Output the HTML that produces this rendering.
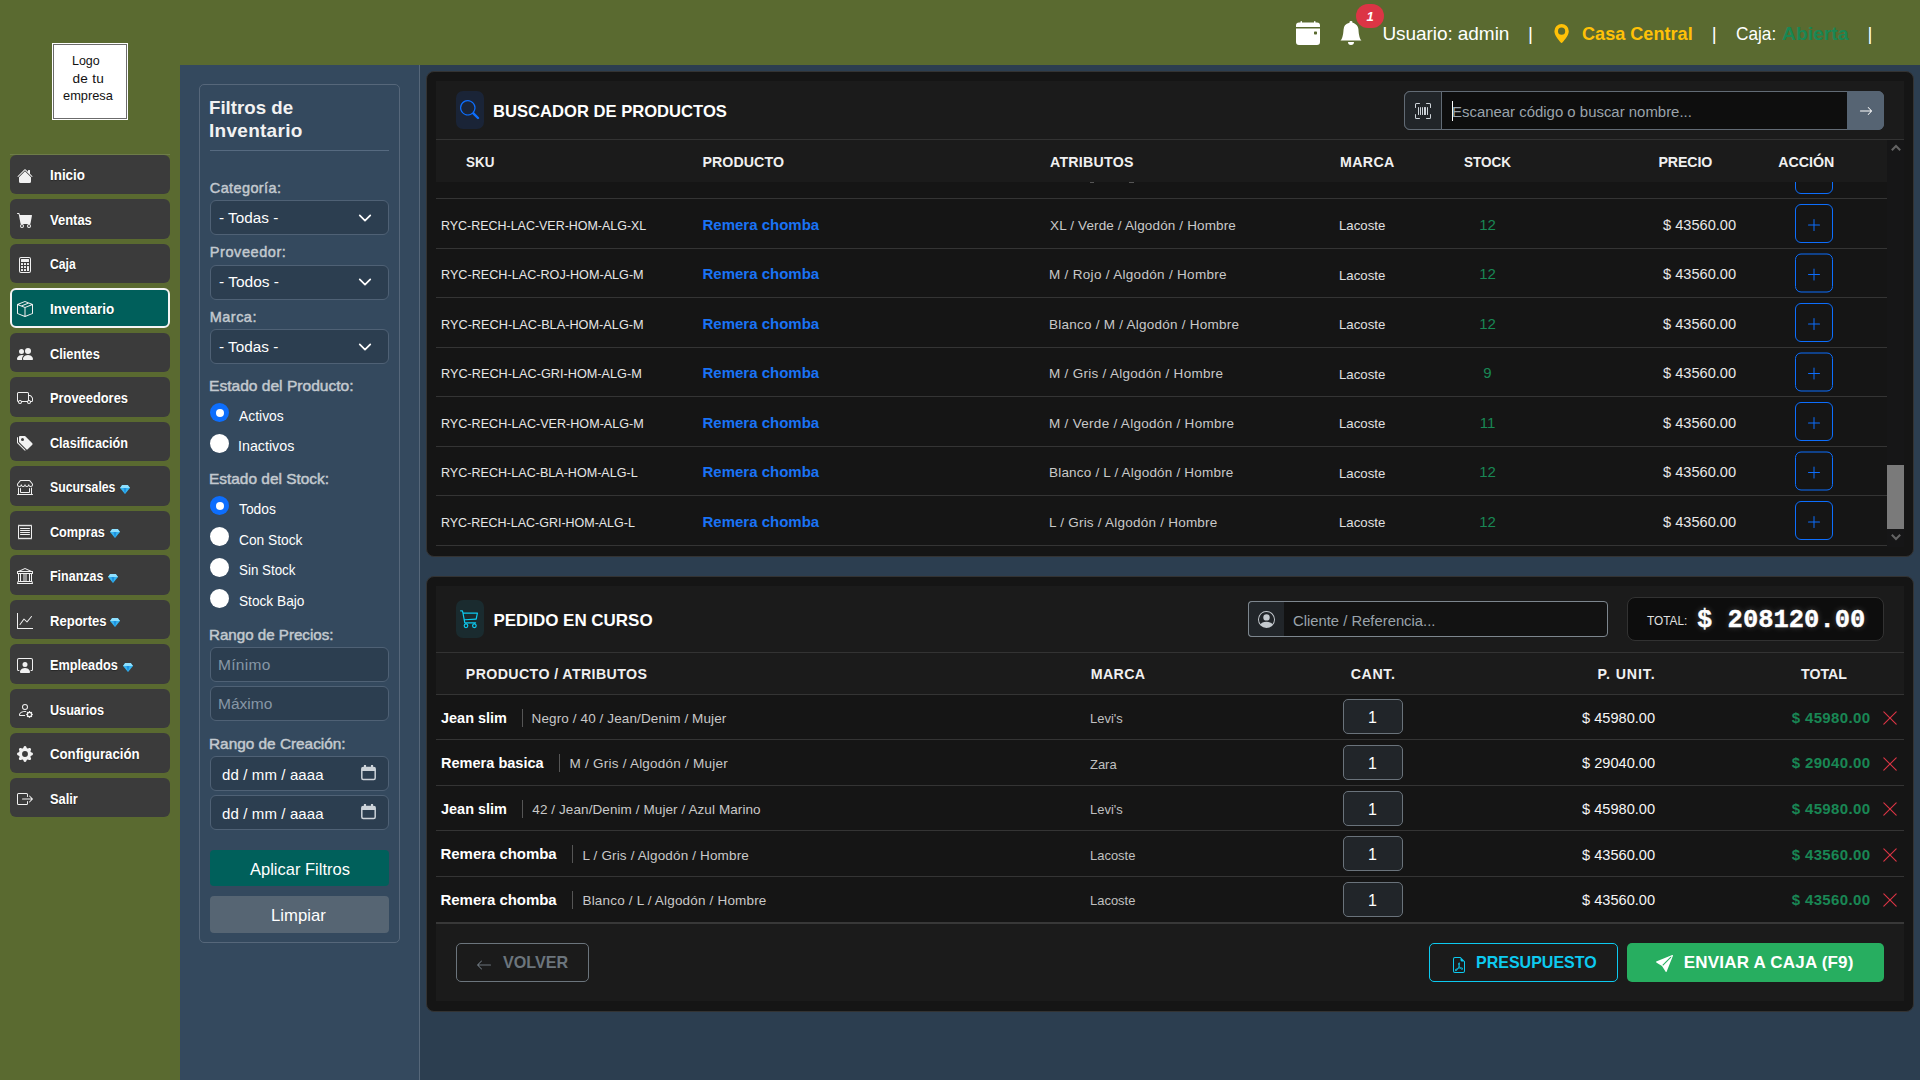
<!DOCTYPE html><html lang="es"><head><meta charset="utf-8"><title>Inventario</title><style>
*{box-sizing:border-box;margin:0;padding:0}
html,body{width:1920px;height:1080px;overflow:hidden}
body{background:#5a6a30;font-family:"Liberation Sans",sans-serif;color:#fff;position:relative}
.abs{position:absolute}
.t{position:absolute;white-space:nowrap;line-height:1}
svg{display:block}
.logo{position:absolute;left:52px;top:43px;width:76px;height:77px;background:#fff;border:1px solid #fff;}
.logo i{position:absolute;left:0;top:0;right:0;bottom:0;border:1px solid #6b6b6b;display:block}
.logo .t{color:#111;font-size:14.5px}
.sline{position:absolute;left:10px;top:154px;width:160px;height:1px;background:rgba(255,255,255,.12)}
.nb{position:absolute;left:10px;width:160px;height:39.5px;background:#3b3b3b;border-radius:6px}
.nb.act{background:#005f5b;border:2px solid #f4f4f4;}
.nb>svg{position:absolute;left:7px;top:12.5px}
.nb.act>svg{left:5px;top:10.5px}
.nb .t{font-weight:bold;font-size:14px;color:#fff;text-shadow:0 1px 1px rgba(0,0,0,.35)}
.tb{position:absolute;top:0;left:0;width:1920px;height:65px}
.tb .t{font-size:19px;color:#fff}
.main{position:absolute;left:180px;top:65px;width:1740px;height:1015px;background:#34495e}
.right{position:absolute;left:239px;top:0;width:1501px;height:1015px;background:#2c3e50;border-left:1px solid #4a5d70}
.fc{position:absolute;left:199px;top:84px;width:201px;height:859px;border:1px solid #56677a;border-radius:5px}
.ttl{font-weight:bold;font-size:19px;color:#f2f2f2}
.hr{position:absolute;left:210px;top:150px;width:179px;height:1px;background:#566a80}
.lbl{font-weight:normal;-webkit-text-stroke:.45px #c3c9cf;font-size:14.5px;color:#c3c9cf}
.sel{position:absolute;left:210px;width:179px;height:35px;background:#2c3e50;border:1px solid #4f6175;border-radius:6px}
.selt{font-size:15.5px;color:#fff}
.rad{position:absolute;left:210px;width:19px;height:19px;border-radius:50%;background:#fff}
.rad.on{background:#0d6efd}
.rad.on:after{content:"";position:absolute;left:5.5px;top:5.5px;width:8px;height:8px;border-radius:50%;background:#fff}
.rl{font-size:14.5px;color:#fff}
.inp{position:absolute;left:210px;width:179px;height:34.5px;background:#2c3e50;border:1px solid #4f6175;border-radius:6px}
.pht{font-size:15.5px;color:#8797a6}
.dt{color:#fff;font-size:15px}
.btnf{position:absolute;left:210px;width:179px;border-radius:4px}
.btnt{font-size:17px;color:#fff}
.pn{position:absolute;left:426px;width:1488px;background:#151515;border:1px solid #333;border-radius:8px}
.ph{position:absolute;left:436px;width:1468px;background:#1b1b1b;border-bottom:1px solid #333}
.ib{position:absolute;left:456px;width:28px;height:38px;border-radius:7px}
.ib svg{position:absolute;left:4.4px;top:9.4px}
.ptt{font-weight:bold;font-size:17px;color:#fff}
.thb{position:absolute;background:#1b1b1b;left:436px}
.tht{font-weight:bold;font-size:14.2px;color:#f0f0f0}
.rb{position:absolute;left:436px;height:1px;background:#343434}
.sku{font-size:13px;color:#e6e6e6}
.prod{font-weight:bold;font-size:15px;color:#1a73f5}
.attr{font-size:13.5px;color:#c9c9c9}
.marca{font-size:13.5px;color:#e0e0e0}
.stock{font-size:15px;color:#198754}
.price{font-size:15px;color:#e8e8e8}
.addb{position:absolute;left:1795px;width:38px;height:38.5px;border:1px solid #0d6efd;border-radius:6px}
.addb svg{position:absolute;left:10.25px;top:11.5px}
.p2n{font-weight:bold;font-size:15px;color:#fff}
.p2m{font-size:13.5px;color:#c0c0c0}
.p2p{font-size:15px;color:#f5f5f5}
.p2t{font-size:15px;font-weight:bold;color:#198754}
.qty{position:absolute;left:1343px;width:60px;height:35px;background:#212529;border:1px solid #6a737b;border-radius:5px}
.qt{font-size:16px;color:#fff}
.bt{font-size:17px;font-weight:bold}
</style></head><body>
<div class="tb">
<div class="abs" style="left:1296px;top:21px"><svg width="24" height="24" viewBox="0 0 16 16" fill="#fff" ><path d="M4 .5a.5.5 0 0 0-1 0V1H2a2 2 0 0 0-2 2v1h16V3a2 2 0 0 0-2-2h-1V.5a.5.5 0 0 0-1 0V1H4zM16 14V5H0v9a2 2 0 0 0 2 2h12a2 2 0 0 0 2-2m-3.500-7h1a.5.5 0 0 1 .5.5v1a.5.5 0 0 1-.5.5h-1a.5.5 0 0 1-.5-.5v-1a.5.5 0 0 1 .5-.5"/></svg></div>
<div class="abs" style="left:1339px;top:21px"><svg width="24" height="24" viewBox="0 0 16 16" fill="#fff" ><path d="M8 16a2 2 0 0 0 2-2H6a2 2 0 0 0 2 2m.995-14.901a1 1 0 1 0-1.99 0A5 5 0 0 0 3 6c0 1.098-.5 6-2 7h14c-1.5-1-2-5.902-2-7 0-2.42-1.72-4.44-4.005-4.901"/></svg></div>
<div class="abs nocal" style="left:1356px;top:4px;width:28px;height:24px;border-radius:12px;background:#dc3545"></div>
<div id="t1" class="t " style="left:1220.00px;width:300px;text-align:center;top:16.00px;transform:translateY(-50%);font-size:13px;font-weight:bold;font-style:italic">1</div>
<div id="t2" class="t " style="left:1382.40px;transform-origin:0 50%;top:32.50px;transform:translateY(-50%);letter-spacing:-0.062px;">Usuario: admin</div>
<div id="t3" class="t " style="left:1380.50px;width:300px;text-align:center;top:32.50px;transform:translateY(-50%);">|</div>
<div class="abs" style="left:1552.3px;top:23.6px"><svg width="19.2" height="19.2" viewBox="0 0 16 16" fill="#ffc107" ><path d="M8 16s6-5.686 6-10A6 6 0 0 0 2 6c0 4.314 6 10 6 10m0-7a3 3 0 1 1 0-6 3 3 0 0 1 0 6"/></svg></div>
<div id="t4" class="t " style="left:1582.00px;transform-origin:0 50%;top:32.50px;transform:translateY(-50%) scaleX(0.9526);font-weight:bold;color:#ffc107">Casa Central</div>
<div id="t5" class="t " style="left:1564.30px;width:300px;text-align:center;top:32.50px;transform:translateY(-50%);">|</div>
<div id="t6" class="t " style="left:1736.00px;transform-origin:0 50%;top:32.50px;transform:translateY(-50%) scaleX(0.9075);">Caja:</div>
<div id="t7" class="t " style="left:1781.80px;transform-origin:0 50%;top:32.50px;transform:translateY(-50%) scaleX(1.0143);font-weight:bold;color:#198754">Abierta</div>
<div id="t8" class="t " style="left:1720.00px;width:300px;text-align:center;top:32.50px;transform:translateY(-50%);">|</div>
</div>
<div class="logo"><i></i></div>
<div id="t9" class="t " style="left:72.00px;transform-origin:0 50%;top:61.00px;transform:translateY(-50%) scaleX(0.9167);color:#111;font-size:13.6px">Logo</div>
<div id="t10" class="t " style="left:72.50px;transform-origin:0 50%;top:78.50px;transform:translateY(-50%);letter-spacing:0.250px;color:#111;font-size:13.6px">de tu</div>
<div id="t11" class="t " style="left:62.50px;transform-origin:0 50%;top:96.00px;transform:translateY(-50%) scaleX(0.9434);color:#111;font-size:13.6px">empresa</div>
<div class="sline"></div>
<div class="nb" style="top:155px;height:39px"><svg width="16" height="16" viewBox="0 0 16 16" fill="#f1f1f1" ><path d="M8.707 1.5a1 1 0 0 0-1.414 0L.646 8.146a.5.5 0 0 0 .708.708L8 2.207l6.646 6.647a.5.5 0 0 0 .708-.708L13 5.793V2.5a.5.5 0 0 0-.5-.5h-1a.5.5 0 0 0-.5.5v1.293z"/><path d="m8 3.293 6 6V13.5a1.5 1.5 0 0 1-1.5 1.5h-9A1.5 1.5 0 0 1 2 13.5V9.293z"/></svg></div>
<div id="t12" class="t nbt" style="left:50.00px;transform-origin:0 50%;top:175.30px;transform:translateY(-50%) scaleX(0.9556);font-weight:bold;font-size:14px;color:#fff;text-shadow:0 1px 1px rgba(0,0,0,.35)">Inicio</div>
<div class="nb" style="top:199px;height:40px"><svg width="16" height="16" viewBox="0 0 16 16" fill="#f1f1f1" ><path d="M0 1.5A.5.5 0 0 1 .5 1H2a.5.5 0 0 1 .485.379L2.89 3H14.5a.5.5 0 0 1 .491.592l-1.5 8A.5.5 0 0 1 13 12H4a.5.5 0 0 1-.491-.408L2.01 3.607 1.61 2H.5a.5.5 0 0 1-.5-.5M5 12a2 2 0 1 0 0 4 2 2 0 0 0 0-4m7 0a2 2 0 1 0 0 4 2 2 0 0 0 0-4m-7 1a1 1 0 1 1 0 2 1 1 0 0 1 0-2m7 0a1 1 0 1 1 0 2 1 1 0 0 1 0-2"/></svg></div>
<div id="t13" class="t nbt" style="left:50.00px;transform-origin:0 50%;top:219.85px;transform:translateY(-50%) scaleX(0.9267);font-weight:bold;font-size:14px;color:#fff;text-shadow:0 1px 1px rgba(0,0,0,.35)">Ventas</div>
<div class="nb" style="top:244px;height:39px"><svg width="16" height="16" viewBox="0 0 16 16" fill="#f1f1f1" ><path d="M12 1a1 1 0 0 1 1 1v12a1 1 0 0 1-1 1H4a1 1 0 0 1-1-1V2a1 1 0 0 1 1-1zM4 0a2 2 0 0 0-2 2v12a2 2 0 0 0 2 2h8a2 2 0 0 0 2-2V2a2 2 0 0 0-2-2z"/><path d="M4 2.5a.5.5 0 0 1 .5-.5h7a.5.5 0 0 1 .5.5v2a.5.5 0 0 1-.5.5h-7a.5.5 0 0 1-.5-.5zm0 4a.5.5 0 0 1 .5-.5h1a.5.5 0 0 1 .5.5v1a.5.5 0 0 1-.5.5h-1a.5.5 0 0 1-.5-.5zm0 3a.5.5 0 0 1 .5-.5h1a.5.5 0 0 1 .5.5v1a.5.5 0 0 1-.5.5h-1a.5.5 0 0 1-.5-.5zm0 3a.5.5 0 0 1 .5-.5h1a.5.5 0 0 1 .5.5v1a.5.5 0 0 1-.5.5h-1a.5.5 0 0 1-.5-.5zm3-6a.5.5 0 0 1 .5-.5h1a.5.5 0 0 1 .5.5v1a.5.5 0 0 1-.5.5h-1a.5.5 0 0 1-.5-.5zm0 3a.5.5 0 0 1 .5-.5h1a.5.5 0 0 1 .5.5v1a.5.5 0 0 1-.5.5h-1a.5.5 0 0 1-.5-.5zm0 3a.5.5 0 0 1 .5-.5h1a.5.5 0 0 1 .5.5v1a.5.5 0 0 1-.5.5h-1a.5.5 0 0 1-.5-.5zm3-6a.5.5 0 0 1 .5-.5h1a.5.5 0 0 1 .5.5v1a.5.5 0 0 1-.5.5h-1a.5.5 0 0 1-.5-.5zm0 3a.5.5 0 0 1 .5-.5h1a.5.5 0 0 1 .5.5v4a.5.5 0 0 1-.5.5h-1a.5.5 0 0 1-.5-.5z"/></svg></div>
<div id="t14" class="t nbt" style="left:50.00px;transform-origin:0 50%;top:264.40px;transform:translateY(-50%) scaleX(0.8667);font-weight:bold;font-size:14px;color:#fff;text-shadow:0 1px 1px rgba(0,0,0,.35)">Caja</div>
<div class="nb act" style="top:288px;height:40px"><svg width="16" height="16" viewBox="0 0 16 16" fill="#f1f1f1" ><path d="M8.186 1.113a.5.5 0 0 0-.372 0L1.846 3.5l2.404.961L10.404 2zm3.564 1.426L5.596 5 8 5.961 14.154 3.5zm3.25 1.7-6.5 2.6v7.922l6.5-2.6V4.24zM7.5 14.762V6.838L1 4.239v7.923zM7.443.184a1.5 1.5 0 0 1 1.114 0l7.129 2.852A.5.5 0 0 1 16 3.5v8.662a1 1 0 0 1-.629.928l-7.185 2.874a.5.5 0 0 1-.372 0L.63 13.09a1 1 0 0 1-.63-.928V3.5a.5.5 0 0 1 .314-.464z"/></svg></div>
<div id="t15" class="t nbt" style="left:50.00px;transform-origin:0 50%;top:308.95px;transform:translateY(-50%) scaleX(0.9582);font-weight:bold;font-size:14px;color:#fff;text-shadow:0 1px 1px rgba(0,0,0,.35)">Inventario</div>
<div class="nb" style="top:333px;height:39px"><svg width="16" height="16" viewBox="0 0 16 16" fill="#f1f1f1" ><path d="M7 14s-1 0-1-1 1-4 5-4 5 3 5 4-1 1-1 1zm4-6a3 3 0 1 0 0-6 3 3 0 0 0 0 6m-5.784 6A2.24 2.24 0 0 1 5 13c0-1.355.68-2.75 1.936-3.72A6.3 6.3 0 0 0 5 9c-4 0-5 3-5 4s1 1 1 1zM4.5 8a2.5 2.5 0 1 0 0-5 2.5 2.5 0 0 0 0 5"/></svg></div>
<div id="t16" class="t nbt" style="left:50.00px;transform-origin:0 50%;top:353.50px;transform:translateY(-50%) scaleX(0.9148);font-weight:bold;font-size:14px;color:#fff;text-shadow:0 1px 1px rgba(0,0,0,.35)">Clientes</div>
<div class="nb" style="top:377px;height:40px"><svg width="16" height="16" viewBox="0 0 16 16" fill="#f1f1f1" ><path d="M0 3.5A1.5 1.5 0 0 1 1.5 2h9A1.5 1.5 0 0 1 12 3.5V5h1.02a1.5 1.5 0 0 1 1.17.563l1.481 1.85a1.5 1.5 0 0 1 .329.938V10.5a1.5 1.5 0 0 1-1.5 1.5H14a2 2 0 1 1-4 0H5a2 2 0 1 1-3.998-.085A1.5 1.5 0 0 1 0 10.5zm1.294 7.456A2 2 0 0 1 4.732 11h5.536a2 2 0 0 1 .732-.732V3.5a.5.5 0 0 0-.5-.5h-9a.5.5 0 0 0-.5.5v7a.5.5 0 0 0 .294.456M12 10a2 2 0 0 1 1.732 1h.768a.5.5 0 0 0 .5-.5V8.35a.5.5 0 0 0-.11-.312l-1.48-1.85A.5.5 0 0 0 13.02 6H12zm-9 1a1 1 0 1 0 0 2 1 1 0 0 0 0-2m9 0a1 1 0 1 0 0 2 1 1 0 0 0 0-2"/></svg></div>
<div id="t17" class="t nbt" style="left:50.00px;transform-origin:0 50%;top:398.05px;transform:translateY(-50%) scaleX(0.9188);font-weight:bold;font-size:14px;color:#fff;text-shadow:0 1px 1px rgba(0,0,0,.35)">Proveedores</div>
<div class="nb" style="top:422px;height:39px"><svg width="16" height="16" viewBox="0 0 16 16" fill="#f1f1f1" ><path d="M2 2a1 1 0 0 1 1-1h4.586a1 1 0 0 1 .707.293l7 7a1 1 0 0 1 0 1.414l-4.586 4.586a1 1 0 0 1-1.414 0l-7-7A1 1 0 0 1 2 6.586zm3.5 4a1.5 1.5 0 1 0 0-3 1.500 1.500 0 0 0 0 3"/><path d="M1.293 7.793A1 1 0 0 1 1 7.086V2a1 1 0 0 0-1 1v4.586a1 1 0 0 0 .293.707l7 7a1 1 0 0 0 1.414 0l.043-.043z"/></svg></div>
<div id="t18" class="t nbt" style="left:50.00px;transform-origin:0 50%;top:442.60px;transform:translateY(-50%) scaleX(0.9012);font-weight:bold;font-size:14px;color:#fff;text-shadow:0 1px 1px rgba(0,0,0,.35)">Clasificación</div>
<div class="nb" style="top:466px;height:40px"><svg width="16" height="16" viewBox="0 0 16 16" fill="#f1f1f1" ><path d="M2.97 1.35A1 1 0 0 1 3.73 1h8.54a1 1 0 0 1 .76.35l2.609 3.044A1.5 1.5 0 0 1 16 5.37v.255a2.375 2.375 0 0 1-4.25 1.458A2.37 2.37 0 0 1 9.875 8 2.37 2.37 0 0 1 8 7.083 2.37 2.37 0 0 1 6.125 8a2.37 2.37 0 0 1-1.875-.917A2.375 2.375 0 0 1 0 5.625V5.37a1.5 1.5 0 0 1 .361-.976zm1.78 4.275a1.375 1.375 0 0 0 2.75 0 .5.5 0 0 1 1 0 1.375 1.375 0 0 0 2.75 0 .5.5 0 0 1 1 0 1.375 1.375 0 1 0 2.75 0V5.37a.5.5 0 0 0-.12-.325L12.27 2H3.73L1.12 5.045A.5.5 0 0 0 1 5.37v.255a1.375 1.375 0 0 0 2.75 0 .5.5 0 0 1 1 0M1.5 8.5A.5.5 0 0 1 2 9v6h12V9a.5.5 0 0 1 1 0v6h.5a.5.5 0 0 1 0 1H.5a.5.5 0 0 1 0-1H1V9a.5.5 0 0 1 .5-.5m2 .5a.5.5 0 0 1 .5.5V13h8V9.5a.5.5 0 0 1 1 0V13a1 1 0 0 1-1 1H4a1 1 0 0 1-1-1V9.5a.5.5 0 0 1 .5-.5"/></svg></div>
<div id="t19" class="t nbt" style="left:50.00px;transform-origin:0 50%;top:487.15px;transform:translateY(-50%) scaleX(0.8757);font-weight:bold;font-size:14px;color:#fff;text-shadow:0 1px 1px rgba(0,0,0,.35)">Sucursales</div>
<div class="abs" style="left:120.4px;top:484.5px"><svg width="10" height="9" viewBox="0 0 10 9"><path d="M2.2 0h5.6L10 3 5 9 0 3z" fill="#35b5f0"/><path d="M2.2 0h5.6L10 3H0z" fill="#8fe0ff"/><path d="M3.5 3h3L5 9z" fill="#1e90e0"/></svg></div>
<div class="nb" style="top:511px;height:39px"><svg width="16" height="16" viewBox="0 0 16 16" fill="#f1f1f1" ><path d="M1.92.506a.5.5 0 0 1 .434.14L3 1.293l.646-.647a.5.5 0 0 1 .708 0L5 1.293l.646-.647a.5.5 0 0 1 .708 0L7 1.293l.646-.647a.5.5 0 0 1 .708 0L9 1.293l.646-.647a.5.5 0 0 1 .708 0l.646.647.646-.647a.5.5 0 0 1 .708 0l.646.647.646-.647a.5.5 0 0 1 .801.13l.5 1A.5.5 0 0 1 15 2v12a.5.5 0 0 1-.053.224l-.5 1a.5.5 0 0 1-.8.13L13 14.707l-.646.647a.5.5 0 0 1-.708 0L11 14.707l-.646.647a.5.5 0 0 1-.708 0L9 14.707l-.646.647a.5.5 0 0 1-.708 0L7 14.707l-.646.647a.5.5 0 0 1-.708 0L5 14.707l-.646.647a.5.5 0 0 1-.708 0L3 14.707l-.646.647a.5.5 0 0 1-.801-.13l-.5-1A.5.5 0 0 1 1 14V2a.5.5 0 0 1 .053-.224l.5-1a.5.5 0 0 1 .367-.27m.217 1.338L2 2.118v11.764l.137.274.51-.51a.5.5 0 0 1 .707 0l.646.647.646-.646a.5.5 0 0 1 .708 0l.646.646.646-.646a.5.5 0 0 1 .708 0l.646.646.646-.646a.5.5 0 0 1 .708 0l.646.646.646-.646a.5.5 0 0 1 .708 0l.646.646.646-.646a.5.5 0 0 1 .708 0l.509.509.137-.274V2.118l-.137-.274-.51.51a.5.5 0 0 1-.707 0L12 1.707l-.646.647a.5.5 0 0 1-.708 0L10 1.707l-.646.647a.5.5 0 0 1-.708 0L8 1.707l-.646.647a.5.5 0 0 1-.708 0L6 1.707l-.646.647a.5.5 0 0 1-.708 0L4 1.707l-.646.647a.5.5 0 0 1-.708 0z"/><path d="M3 4.5a.5.5 0 0 1 .5-.5h9a.5.5 0 0 1 0 1h-9a.5.5 0 0 1-.5-.5m0 2a.5.5 0 0 1 .5-.5h9a.5.5 0 0 1 0 1h-9a.5.5 0 0 1-.5-.5m0 2a.5.5 0 0 1 .5-.5h9a.5.5 0 0 1 0 1h-9a.5.5 0 0 1-.5-.5m0 2a.5.5 0 0 1 .5-.5h9a.5.5 0 0 1 0 1h-9a.5.5 0 0 1-.5-.5"/></svg></div>
<div id="t20" class="t nbt" style="left:50.00px;transform-origin:0 50%;top:531.70px;transform:translateY(-50%) scaleX(0.9025);font-weight:bold;font-size:14px;color:#fff;text-shadow:0 1px 1px rgba(0,0,0,.35)">Compras</div>
<div class="abs" style="left:109.8px;top:529.0px"><svg width="10" height="9" viewBox="0 0 10 9"><path d="M2.2 0h5.6L10 3 5 9 0 3z" fill="#35b5f0"/><path d="M2.2 0h5.6L10 3H0z" fill="#8fe0ff"/><path d="M3.5 3h3L5 9z" fill="#1e90e0"/></svg></div>
<div class="nb" style="top:555px;height:40px"><svg width="16" height="16" viewBox="0 0 16 16" fill="#f1f1f1" ><path d="m8 0 6.61 3h.89a.5.5 0 0 1 .5.5v2a.5.5 0 0 1-.5.5H15v7a.5.5 0 0 1 .485.38l.5 2a.498.498 0 0 1-.485.62H.5a.498.498 0 0 1-.485-.62l.5-2A.5.5 0 0 1 1 13V6H.5a.5.5 0 0 1-.5-.5v-2A.5.5 0 0 1 .5 3h.89zM3.777 3h8.447L8 1zM2 6v7h1V6zm2 0v7h2.5V6zm3.5 0v7h1V6zm2 0v7H12V6zM13 6v7h1V6zm2-1V4H1v1zm-.39 9H1.39l-.25 1h13.72z"/></svg></div>
<div id="t21" class="t nbt" style="left:50.00px;transform-origin:0 50%;top:576.25px;transform:translateY(-50%) scaleX(0.8908);font-weight:bold;font-size:14px;color:#fff;text-shadow:0 1px 1px rgba(0,0,0,.35)">Finanzas</div>
<div class="abs" style="left:108.3px;top:573.5px"><svg width="10" height="9" viewBox="0 0 10 9"><path d="M2.2 0h5.6L10 3 5 9 0 3z" fill="#35b5f0"/><path d="M2.2 0h5.6L10 3H0z" fill="#8fe0ff"/><path d="M3.5 3h3L5 9z" fill="#1e90e0"/></svg></div>
<div class="nb" style="top:600px;height:39px"><svg width="16" height="16" viewBox="0 0 16 16" fill="#f1f1f1" ><path fill-rule="evenodd" d="M0 0h1v15h15v1H0zm14.817 3.113a.5.5 0 0 1 .07.704l-4.5 5.5a.5.5 0 0 1-.74.037L7.06 6.767l-3.656 5.027a.5.5 0 0 1-.808-.588l4-5.5a.5.5 0 0 1 .758-.06l2.609 2.61 4.15-5.073a.5.5 0 0 1 .704-.07"/></svg></div>
<div id="t22" class="t nbt" style="left:50.00px;transform-origin:0 50%;top:620.80px;transform:translateY(-50%) scaleX(0.9311);font-weight:bold;font-size:14px;color:#fff;text-shadow:0 1px 1px rgba(0,0,0,.35)">Reportes</div>
<div class="abs" style="left:110.3px;top:618.0px"><svg width="10" height="9" viewBox="0 0 10 9"><path d="M2.2 0h5.6L10 3 5 9 0 3z" fill="#35b5f0"/><path d="M2.2 0h5.6L10 3H0z" fill="#8fe0ff"/><path d="M3.5 3h3L5 9z" fill="#1e90e0"/></svg></div>
<div class="nb" style="top:644px;height:40px"><svg width="16" height="16" viewBox="0 0 16 16" fill="#f1f1f1" ><path d="M4 16s-1 0-1-1 1-4 5-4 5 3 5 4-1 1-1 1zm4-5.950a2.500 2.500 0 1 0 0-5 2.500 2.500 0 0 0 0 5"/><path d="M2 1a2 2 0 0 0-2 2v9.500A1.500 1.500 0 0 0 1.500 14h.653a5.400 5.400 0 0 1 .400-1H1.500a.5.5 0 0 1-.5-.5V3a1 1 0 0 1 1-1h12a1 1 0 0 1 1 1v9.500a.5.5 0 0 1-.5.5h-1.053c.160.360.310.690.400 1h.653a1.500 1.500 0 0 0 1.500-1.500V3a2 2 0 0 0-2-2z"/></svg></div>
<div id="t23" class="t nbt" style="left:50.00px;transform-origin:0 50%;top:665.35px;transform:translateY(-50%) scaleX(0.9068);font-weight:bold;font-size:14px;color:#fff;text-shadow:0 1px 1px rgba(0,0,0,.35)">Empleados</div>
<div class="abs" style="left:122.6px;top:662.5px"><svg width="10" height="9" viewBox="0 0 10 9"><path d="M2.2 0h5.6L10 3 5 9 0 3z" fill="#35b5f0"/><path d="M2.2 0h5.6L10 3H0z" fill="#8fe0ff"/><path d="M3.5 3h3L5 9z" fill="#1e90e0"/></svg></div>
<div class="nb" style="top:689px;height:39px"><svg width="16" height="16" viewBox="0 0 16 16" fill="#f1f1f1" ><path d="M11 5a3 3 0 1 1-6 0 3 3 0 0 1 6 0M8 7a2 2 0 1 0 0-4 2 2 0 0 0 0 4m.256 7a4.5 4.5 0 0 1-.229-1.004H3c.001-.246.154-.986.832-1.664C4.484 10.68 5.711 10 8 10q.39 0 .74.025c.226-.341.496-.65.804-.918Q8.844 9.002 8 9c-5 0-6 3-6 4s1 1 1 1zm3.63-4.54c.18-.613 1.048-.613 1.229 0l.043.148a.64.64 0 0 0 .921.382l.136-.074c.561-.306 1.175.308.87.869l-.075.136a.64.64 0 0 0 .382.92l.149.045c.612.18.612 1.048 0 1.229l-.15.043a.64.64 0 0 0-.38.921l.074.136c.305.561-.309 1.175-.87.87l-.136-.075a.64.64 0 0 0-.92.382l-.045.149c-.18.612-1.048.612-1.229 0l-.043-.15a.64.64 0 0 0-.921-.38l-.136.074c-.561.305-1.175-.309-.87-.87l.075-.136a.64.64 0 0 0-.382-.92l-.148-.045c-.613-.18-.613-1.048 0-1.229l.148-.043a.64.64 0 0 0 .382-.921l-.074-.136c-.306-.561.308-1.175.869-.87l.136.075a.64.64 0 0 0 .92-.382zM14 12.5a1.5 1.5 0 1 0-3 0 1.5 1.5 0 0 0 3 0"/></svg></div>
<div id="t24" class="t nbt" style="left:50.00px;transform-origin:0 50%;top:709.90px;transform:translateY(-50%) scaleX(0.9017);font-weight:bold;font-size:14px;color:#fff;text-shadow:0 1px 1px rgba(0,0,0,.35)">Usuarios</div>
<div class="nb" style="top:733px;height:40px"><svg width="16" height="16" viewBox="0 0 16 16" fill="#f1f1f1" ><path d="M9.405 1.05c-.413-1.4-2.397-1.4-2.81 0l-.1.34a1.464 1.464 0 0 1-2.105.872l-.31-.17c-1.283-.698-2.686.705-1.987 1.987l.169.311c.446.82.023 1.841-.872 2.105l-.34.1c-1.4.413-1.4 2.397 0 2.810l.34.1a1.464 1.464 0 0 1 .872 2.105l-.17.31c-.698 1.283.705 2.686 1.987 1.987l.311-.169a1.464 1.464 0 0 1 2.105.872l.1.34c.413 1.4 2.397 1.4 2.81 0l.1-.34a1.464 1.464 0 0 1 2.105-.872l.31.17c1.283.698 2.686-.705 1.987-1.987l-.169-.311a1.464 1.464 0 0 1 .872-2.105l.34-.1c1.4-.413 1.4-2.397 0-2.810l-.34-.1a1.464 1.464 0 0 1-.872-2.105l.17-.31c.698-1.283-.705-2.686-1.987-1.987l-.311.169a1.464 1.464 0 0 1-2.105-.872zM8 10.930a2.929 2.929 0 1 1 0-5.860 2.929 2.929 0 0 1 0 5.858z"/></svg></div>
<div id="t25" class="t nbt" style="left:50.00px;transform-origin:0 50%;top:754.45px;transform:translateY(-50%) scaleX(0.9436);font-weight:bold;font-size:14px;color:#fff;text-shadow:0 1px 1px rgba(0,0,0,.35)">Configuración</div>
<div class="nb" style="top:778px;height:39px"><svg width="16" height="16" viewBox="0 0 16 16" fill="#f1f1f1" ><path fill-rule="evenodd" d="M10 12.5a.5.5 0 0 1-.5.5h-8a.5.5 0 0 1-.5-.5v-9a.5.5 0 0 1 .5-.5h8a.5.5 0 0 1 .5.5v2a.5.5 0 0 0 1 0v-2A1.5 1.5 0 0 0 9.500 2h-8A1.500 1.500 0 0 0 0 3.500v9A1.500 1.500 0 0 0 1.500 14h8a1.500 1.500 0 0 0 1.500-1.500v-2a.5.5 0 0 0-1 0z"/><path fill-rule="evenodd" d="M15.854 8.354a.5.5 0 0 0 0-.708l-3-3a.5.5 0 0 0-.708.708L14.293 7.500H5.500a.5.5 0 0 0 0 1h8.793l-2.147 2.146a.5.5 0 0 0 .708.708z"/></svg></div>
<div id="t26" class="t nbt" style="left:50.00px;transform-origin:0 50%;top:799.00px;transform:translateY(-50%) scaleX(0.9167);font-weight:bold;font-size:14px;color:#fff;text-shadow:0 1px 1px rgba(0,0,0,.35)">Salir</div>
<div class="main"></div>
<div class="abs" style="left:419px;top:65px;width:1501px;height:1015px;background:#2c3e50;border-left:1px solid #566779"></div>
<div class="fc"></div>
<div id="t27" class="t ttl" style="left:209.00px;transform-origin:0 50%;top:107.00px;transform:translateY(-50%) scaleX(0.9834);">Filtros de</div>
<div id="t28" class="t ttl" style="left:209.00px;transform-origin:0 50%;top:130.00px;transform:translateY(-50%);letter-spacing:0.278px;">Inventario</div>
<div class="hr"></div>
<div id="t29" class="t lbl" style="left:209.80px;transform-origin:0 50%;top:188.00px;transform:translateY(-50%);letter-spacing:0.378px;">Categoría:</div>
<div class="sel" style="top:200px"></div>
<div id="t30" class="t selt" style="left:219.00px;transform-origin:0 50%;top:217.50px;transform:translateY(-50%) scaleX(0.9868);">- Todas -</div>
<div class="abs" style="left:357.5px;top:210.5px"><svg width="14" height="14" viewBox="0 0 16 16" fill="none" stroke="#fff" stroke-width="2" stroke-linecap="round" stroke-linejoin="round"><path d="m2 5 6 6 6-6"/></svg></div>
<div id="t31" class="t lbl" style="left:209.80px;transform-origin:0 50%;top:252.00px;transform:translateY(-50%);letter-spacing:0.567px;">Proveedor:</div>
<div class="sel" style="top:264.5px"></div>
<div id="t32" class="t selt" style="left:219.00px;transform-origin:0 50%;top:282.00px;transform:translateY(-50%);">- Todos -</div>
<div class="abs" style="left:357.5px;top:275.0px"><svg width="14" height="14" viewBox="0 0 16 16" fill="none" stroke="#fff" stroke-width="2" stroke-linecap="round" stroke-linejoin="round"><path d="m2 5 6 6 6-6"/></svg></div>
<div id="t33" class="t lbl" style="left:209.80px;transform-origin:0 50%;top:317.00px;transform:translateY(-50%);letter-spacing:0.460px;">Marca:</div>
<div class="sel" style="top:329px"></div>
<div id="t34" class="t selt" style="left:219.00px;transform-origin:0 50%;top:346.50px;transform:translateY(-50%) scaleX(0.9868);">- Todas -</div>
<div class="abs" style="left:357.5px;top:339.5px"><svg width="14" height="14" viewBox="0 0 16 16" fill="none" stroke="#fff" stroke-width="2" stroke-linecap="round" stroke-linejoin="round"><path d="m2 5 6 6 6-6"/></svg></div>
<div id="t35" class="t lbl" style="left:209.00px;transform-origin:0 50%;top:385.50px;transform:translateY(-50%) scaleX(1.0738);">Estado del Producto:</div>
<div class="rad on" style="top:403.2px"></div>
<div id="t36" class="t rl" style="left:238.90px;transform-origin:0 50%;top:415.70px;transform:translateY(-50%) scaleX(0.9574);">Activos</div>
<div class="rad" style="top:433.5px"></div>
<div id="t37" class="t rl" style="left:237.80px;transform-origin:0 50%;top:446.00px;transform:translateY(-50%) scaleX(0.9839);">Inactivos</div>
<div id="t38" class="t lbl" style="left:209.00px;transform-origin:0 50%;top:478.60px;transform:translateY(-50%) scaleX(1.0639);">Estado del Stock:</div>
<div class="rad on" style="top:496.0px"></div>
<div id="t39" class="t rl" style="left:238.90px;transform-origin:0 50%;top:508.50px;transform:translateY(-50%) scaleX(0.9532);">Todos</div>
<div class="rad" style="top:527.0px"></div>
<div id="t40" class="t rl" style="left:238.90px;transform-origin:0 50%;top:539.50px;transform:translateY(-50%) scaleX(0.9493);">Con Stock</div>
<div class="rad" style="top:557.8px"></div>
<div id="t41" class="t rl" style="left:238.90px;transform-origin:0 50%;top:570.30px;transform:translateY(-50%) scaleX(0.9215);">Sin Stock</div>
<div class="rad" style="top:588.5px"></div>
<div id="t42" class="t rl" style="left:238.90px;transform-origin:0 50%;top:601.00px;transform:translateY(-50%) scaleX(0.9435);">Stock Bajo</div>
<div id="t43" class="t lbl" style="left:209.00px;transform-origin:0 50%;top:634.50px;transform:translateY(-50%) scaleX(1.0435);">Rango de Precios:</div>
<div class="inp" style="top:647px"></div>
<div id="t44" class="t pht" style="left:218.00px;transform-origin:0 50%;top:664.50px;transform:translateY(-50%);letter-spacing:0.300px;">Mínimo</div>
<div class="inp" style="top:686.3px"></div>
<div id="t45" class="t pht" style="left:218.00px;transform-origin:0 50%;top:704.00px;transform:translateY(-50%);">Máximo</div>
<div id="t46" class="t lbl" style="left:209.00px;transform-origin:0 50%;top:743.50px;transform:translateY(-50%) scaleX(1.0592);">Rango de Creación:</div>
<div class="inp" style="top:756.3px"></div>
<div id="t47" class="t dt" style="left:222.00px;transform-origin:0 50%;top:773.80px;transform:translateY(-50%);letter-spacing:0.123px;">dd / mm / aaaa</div>
<div class="abs" style="left:360px;top:764.3px"><svg width="17" height="17" viewBox="0 0 16 16" fill="none" stroke="#cdd3d9" stroke-width="1.4"><rect x="1.7" y="3.2" width="12.6" height="11.3" rx="1.4"/><path d="M1.700 5h12.600" stroke-width="3.2"/><path d="M4.700 1v3M11.300 1v3" stroke-width="2"/></svg></div>
<div class="inp" style="top:795.3px"></div>
<div id="t48" class="t dt" style="left:222.00px;transform-origin:0 50%;top:812.80px;transform:translateY(-50%);letter-spacing:0.123px;">dd / mm / aaaa</div>
<div class="abs" style="left:360px;top:803.3px"><svg width="17" height="17" viewBox="0 0 16 16" fill="none" stroke="#cdd3d9" stroke-width="1.4"><rect x="1.7" y="3.2" width="12.6" height="11.3" rx="1.4"/><path d="M1.700 5h12.600" stroke-width="3.2"/><path d="M4.700 1v3M11.300 1v3" stroke-width="2"/></svg></div>
<div class="btnf" style="top:850px;height:36px;background:#00605b"></div>
<div id="t49" class="t btnt" style="left:249.50px;transform-origin:0 50%;top:868.50px;transform:translateY(-50%) scaleX(0.9709);">Aplicar Filtros</div>
<div class="btnf" style="top:896px;height:37px;background:#566573"></div>
<div id="t50" class="t btnt" style="left:271.00px;transform-origin:0 50%;top:915.00px;transform:translateY(-50%) scaleX(0.9818);">Limpiar</div>
<div class="pn" style="top:71px;height:486px"></div>
<div class="ph" style="top:81px;height:59px"></div>
<div class="ib" style="top:91px;background:#1a2437"><svg width="19.2" height="19.2" viewBox="0 0 16 16" fill="#0d6efd" ><path d="M11.742 10.344a6.5 6.5 0 1 0-1.397 1.398h-.001q.044.06.098.115l3.85 3.85a1 1 0 0 0 1.415-1.414l-3.85-3.85a1 1 0 0 0-.115-.1zM12 6.5a5.5 5.5 0 1 1-11 0 5.5 5.5 0 0 1 11 0"/></svg></div>
<div id="t51" class="t ptt" style="left:493.40px;transform-origin:0 50%;top:110.80px;transform:translateY(-50%) scaleX(0.9762);">BUSCADOR DE PRODUCTOS</div>
<div class="abs" style="left:1404px;top:91px;width:480px;height:38.5px;border-radius:6px;background:#0e0e0e;border:1px solid #626b75"></div>
<div class="abs" style="left:1404px;top:91px;width:38px;height:38.5px;border-radius:6px 0 0 6px;background:#212529;border:1px solid #626b75"><div class="abs" style="left:10px;top:11px"><svg width="16" height="16" viewBox="0 0 16 16" fill="#ced4da" ><path d="M1.5 1a.5.5 0 0 0-.5.5v3a.5.5 0 0 1-1 0v-3A1.5 1.5 0 0 1 1.5 0h3a.5.5 0 0 1 0 1zM11 .5a.5.5 0 0 1 .5-.5h3A1.5 1.5 0 0 1 16 1.5v3a.5.5 0 0 1-1 0v-3a.5.5 0 0 0-.5-.5h-3a.5.5 0 0 1-.5-.5M.5 11a.5.5 0 0 1 .5.5v3a.5.5 0 0 0 .5.5h3a.5.5 0 0 1 0 1h-3A1.5 1.5 0 0 1 0 14.5v-3a.5.5 0 0 1 .5-.5m15 0a.5.5 0 0 1 .5.5v3a1.5 1.5 0 0 1-1.5 1.5h-3a.5.5 0 0 1 0-1h3a.5.5 0 0 0 .5-.5v-3a.5.5 0 0 1 .5-.5M3 4.5a.5.5 0 0 1 1 0v7a.5.5 0 0 1-1 0zm2 0a.5.5 0 0 1 1 0v7a.5.5 0 0 1-1 0zm2 0a.5.5 0 0 1 1 0v7a.5.5 0 0 1-1 0zm2 0a.5.5 0 0 1 .5-.5h1a.5.5 0 0 1 .5.5v7a.5.5 0 0 1-.5.5h-1a.5.5 0 0 1-.5-.5zm3 0a.5.5 0 0 1 1 0v7a.5.5 0 0 1-1 0z"/></svg></div></div>
<div class="abs" style="left:1847px;top:91px;width:37px;height:38.5px;border-radius:0 6px 6px 0;background:#566473"><div class="abs" style="left:11.7px;top:13px"><svg width="14" height="14" viewBox="0 0 16 16" fill="#fff" ><path fill-rule="evenodd" d="M1 8a.5.5 0 0 1 .5-.5h11.793l-3.147-3.146a.5.5 0 0 1 .708-.708l4 4a.5.5 0 0 1 0 .708l-4 4a.5.5 0 0 1-.708-.708L13.293 8.5H1.5A.5.5 0 0 1 1 8"/></svg></div></div>
<div class="abs" style="left:1452px;top:101px;width:1px;height:20px;background:#fff"></div>
<div id="t52" class="t " style="left:1452.30px;transform-origin:0 50%;top:112.00px;transform:translateY(-50%) scaleX(0.9633);font-size:15.5px;color:#9aa3ab">Escanear código o buscar nombre...</div>
<div class="thb" style="top:140px;width:1451px;height:42px"></div>
<div id="t53" class="t tht" style="left:465.80px;transform-origin:0 50%;top:161.70px;transform:translateY(-50%) scaleX(0.9483);">SKU</div>
<div id="t54" class="t tht" style="left:702.50px;transform-origin:0 50%;top:161.70px;transform:translateY(-50%);letter-spacing:0.071px;">PRODUCTO</div>
<div id="t55" class="t tht" style="left:1050.00px;transform-origin:0 50%;top:161.70px;transform:translateY(-50%);letter-spacing:0.250px;">ATRIBUTOS</div>
<div id="t56" class="t tht" style="left:1340.00px;transform-origin:0 50%;top:161.70px;transform:translateY(-50%);letter-spacing:0.375px;">MARCA</div>
<div id="t57" class="t tht" style="left:1464.00px;transform-origin:0 50%;top:161.70px;transform:translateY(-50%) scaleX(0.9500);">STOCK</div>
<div id="t58" class="t tht" style="left:1658.50px;transform-origin:0 50%;top:161.70px;transform:translateY(-50%);letter-spacing:-0.100px;">PRECIO</div>
<div id="t59" class="t tht" style="left:1778.25px;transform-origin:0 50%;top:161.70px;transform:translateY(-50%);">ACCIÓN</div>
<div class="abs" style="left:436px;top:182px;width:1451px;height:16px;overflow:hidden"><div class="addb" style="left:1359px;top:-27px"></div></div>
<div class="abs" style="left:1090px;top:182px;width:4px;height:1px;background:#555"></div>
<div class="abs" style="left:1129px;top:182px;width:5px;height:1px;background:#555"></div>
<div class="rb" style="top:198px;width:1451px"></div>
<div id="t60" class="t sku" style="left:441.20px;transform-origin:0 50%;top:224.50px;transform:translateY(-50%) scaleX(0.9580);">RYC-RECH-LAC-VER-HOM-ALG-XL</div>
<div id="t61" class="t prod" style="left:702.50px;transform-origin:0 50%;top:223.90px;transform:translateY(-50%);">Remera chomba</div>
<div id="t62" class="t attr" style="left:1050.00px;transform-origin:0 50%;top:225.50px;transform:translateY(-50%);letter-spacing:0.143px;">XL / Verde / Algodón / Hombre</div>
<div id="t63" class="t marca" style="left:1339.00px;transform-origin:0 50%;top:226.10px;transform:translateY(-50%) scaleX(0.9783);">Lacoste</div>
<div id="t64" class="t price" style="left:1663.25px;transform-origin:0 50%;top:223.70px;transform:translateY(-50%) scaleX(0.9733);">$ 43560.00</div>
<div id="t65" class="t stock" style="left:1337.50px;width:300px;text-align:center;top:223.70px;transform:translateY(-50%);">12</div>
<div class="addb" style="top:204px;"><svg width="16" height="16" viewBox="0 0 16 16" fill="#0d6efd" ><path fill-rule="evenodd" d="M8 2a.5.5 0 0 1 .5.5v5h5a.5.5 0 0 1 0 1h-5v5a.5.5 0 0 1-1 0v-5h-5a.5.5 0 0 1 0-1h5v-5A.5.5 0 0 1 8 2"/></svg></div>
<div class="rb" style="top:248px;width:1451px"></div>
<div id="t66" class="t sku" style="left:441.20px;transform-origin:0 50%;top:274.00px;transform:translateY(-50%) scaleX(0.9720);">RYC-RECH-LAC-ROJ-HOM-ALG-M</div>
<div id="t67" class="t prod" style="left:702.50px;transform-origin:0 50%;top:273.40px;transform:translateY(-50%);">Remera chomba</div>
<div id="t68" class="t attr" style="left:1049.00px;transform-origin:0 50%;top:275.00px;transform:translateY(-50%);letter-spacing:0.308px;">M / Rojo / Algodón / Hombre</div>
<div id="t69" class="t marca" style="left:1339.00px;transform-origin:0 50%;top:275.60px;transform:translateY(-50%) scaleX(0.9783);">Lacoste</div>
<div id="t70" class="t price" style="left:1663.25px;transform-origin:0 50%;top:273.20px;transform:translateY(-50%) scaleX(0.9733);">$ 43560.00</div>
<div id="t71" class="t stock" style="left:1337.50px;width:300px;text-align:center;top:273.20px;transform:translateY(-50%);">12</div>
<div class="addb" style="top:253px;transform:translateY(.5px)"><svg width="16" height="16" viewBox="0 0 16 16" fill="#0d6efd" ><path fill-rule="evenodd" d="M8 2a.5.5 0 0 1 .5.5v5h5a.5.5 0 0 1 0 1h-5v5a.5.5 0 0 1-1 0v-5h-5a.5.5 0 0 1 0-1h5v-5A.5.5 0 0 1 8 2"/></svg></div>
<div class="rb" style="top:297px;width:1451px"></div>
<div id="t72" class="t sku" style="left:441.20px;transform-origin:0 50%;top:323.50px;transform:translateY(-50%) scaleX(0.9786);">RYC-RECH-LAC-BLA-HOM-ALG-M</div>
<div id="t73" class="t prod" style="left:702.50px;transform-origin:0 50%;top:322.90px;transform:translateY(-50%);">Remera chomba</div>
<div id="t74" class="t attr" style="left:1049.00px;transform-origin:0 50%;top:324.50px;transform:translateY(-50%);letter-spacing:0.250px;">Blanco / M / Algodón / Hombre</div>
<div id="t75" class="t marca" style="left:1339.00px;transform-origin:0 50%;top:325.10px;transform:translateY(-50%) scaleX(0.9783);">Lacoste</div>
<div id="t76" class="t price" style="left:1663.25px;transform-origin:0 50%;top:322.70px;transform:translateY(-50%) scaleX(0.9733);">$ 43560.00</div>
<div id="t77" class="t stock" style="left:1337.50px;width:300px;text-align:center;top:322.70px;transform:translateY(-50%);">12</div>
<div class="addb" style="top:303px;"><svg width="16" height="16" viewBox="0 0 16 16" fill="#0d6efd" ><path fill-rule="evenodd" d="M8 2a.5.5 0 0 1 .5.5v5h5a.5.5 0 0 1 0 1h-5v5a.5.5 0 0 1-1 0v-5h-5a.5.5 0 0 1 0-1h5v-5A.5.5 0 0 1 8 2"/></svg></div>
<div class="rb" style="top:347px;width:1451px"></div>
<div id="t78" class="t sku" style="left:441.20px;transform-origin:0 50%;top:373.00px;transform:translateY(-50%) scaleX(0.9765);">RYC-RECH-LAC-GRI-HOM-ALG-M</div>
<div id="t79" class="t prod" style="left:702.50px;transform-origin:0 50%;top:372.40px;transform:translateY(-50%);">Remera chomba</div>
<div id="t80" class="t attr" style="left:1049.00px;transform-origin:0 50%;top:374.00px;transform:translateY(-50%);letter-spacing:0.288px;">M / Gris / Algodón / Hombre</div>
<div id="t81" class="t marca" style="left:1339.00px;transform-origin:0 50%;top:374.60px;transform:translateY(-50%) scaleX(0.9783);">Lacoste</div>
<div id="t82" class="t price" style="left:1663.25px;transform-origin:0 50%;top:372.20px;transform:translateY(-50%) scaleX(0.9733);">$ 43560.00</div>
<div id="t83" class="t stock" style="left:1337.50px;width:300px;text-align:center;top:372.20px;transform:translateY(-50%);">9</div>
<div class="addb" style="top:352px;transform:translateY(.5px)"><svg width="16" height="16" viewBox="0 0 16 16" fill="#0d6efd" ><path fill-rule="evenodd" d="M8 2a.5.5 0 0 1 .5.5v5h5a.5.5 0 0 1 0 1h-5v5a.5.5 0 0 1-1 0v-5h-5a.5.5 0 0 1 0-1h5v-5A.5.5 0 0 1 8 2"/></svg></div>
<div class="rb" style="top:396px;width:1451px"></div>
<div id="t84" class="t sku" style="left:441.20px;transform-origin:0 50%;top:422.50px;transform:translateY(-50%) scaleX(0.9692);">RYC-RECH-LAC-VER-HOM-ALG-M</div>
<div id="t85" class="t prod" style="left:702.50px;transform-origin:0 50%;top:421.90px;transform:translateY(-50%);">Remera chomba</div>
<div id="t86" class="t attr" style="left:1049.00px;transform-origin:0 50%;top:423.50px;transform:translateY(-50%);letter-spacing:0.296px;">M / Verde / Algodón / Hombre</div>
<div id="t87" class="t marca" style="left:1339.00px;transform-origin:0 50%;top:424.10px;transform:translateY(-50%) scaleX(0.9783);">Lacoste</div>
<div id="t88" class="t price" style="left:1663.25px;transform-origin:0 50%;top:421.70px;transform:translateY(-50%) scaleX(0.9733);">$ 43560.00</div>
<div id="t89" class="t stock" style="left:1337.50px;width:300px;text-align:center;top:421.70px;transform:translateY(-50%);">11</div>
<div class="addb" style="top:402px;"><svg width="16" height="16" viewBox="0 0 16 16" fill="#0d6efd" ><path fill-rule="evenodd" d="M8 2a.5.5 0 0 1 .5.5v5h5a.5.5 0 0 1 0 1h-5v5a.5.5 0 0 1-1 0v-5h-5a.5.5 0 0 1 0-1h5v-5A.5.5 0 0 1 8 2"/></svg></div>
<div class="rb" style="top:446px;width:1451px"></div>
<div id="t90" class="t sku" style="left:441.20px;transform-origin:0 50%;top:472.00px;transform:translateY(-50%) scaleX(0.9665);">RYC-RECH-LAC-BLA-HOM-ALG-L</div>
<div id="t91" class="t prod" style="left:702.50px;transform-origin:0 50%;top:471.40px;transform:translateY(-50%);">Remera chomba</div>
<div id="t92" class="t attr" style="left:1049.00px;transform-origin:0 50%;top:473.00px;transform:translateY(-50%);letter-spacing:0.196px;">Blanco / L / Algodón / Hombre</div>
<div id="t93" class="t marca" style="left:1339.00px;transform-origin:0 50%;top:473.60px;transform:translateY(-50%) scaleX(0.9783);">Lacoste</div>
<div id="t94" class="t price" style="left:1663.25px;transform-origin:0 50%;top:471.20px;transform:translateY(-50%) scaleX(0.9733);">$ 43560.00</div>
<div id="t95" class="t stock" style="left:1337.50px;width:300px;text-align:center;top:471.20px;transform:translateY(-50%);">12</div>
<div class="addb" style="top:451px;transform:translateY(.5px)"><svg width="16" height="16" viewBox="0 0 16 16" fill="#0d6efd" ><path fill-rule="evenodd" d="M8 2a.5.5 0 0 1 .5.5v5h5a.5.5 0 0 1 0 1h-5v5a.5.5 0 0 1-1 0v-5h-5a.5.5 0 0 1 0-1h5v-5A.5.5 0 0 1 8 2"/></svg></div>
<div class="rb" style="top:495px;width:1451px"></div>
<div id="t96" class="t sku" style="left:441.20px;transform-origin:0 50%;top:521.50px;transform:translateY(-50%) scaleX(0.9597);">RYC-RECH-LAC-GRI-HOM-ALG-L</div>
<div id="t97" class="t prod" style="left:702.50px;transform-origin:0 50%;top:520.90px;transform:translateY(-50%);">Remera chomba</div>
<div id="t98" class="t attr" style="left:1049.00px;transform-origin:0 50%;top:522.50px;transform:translateY(-50%);letter-spacing:0.231px;">L / Gris / Algodón / Hombre</div>
<div id="t99" class="t marca" style="left:1339.00px;transform-origin:0 50%;top:523.10px;transform:translateY(-50%) scaleX(0.9783);">Lacoste</div>
<div id="t100" class="t price" style="left:1663.25px;transform-origin:0 50%;top:520.70px;transform:translateY(-50%) scaleX(0.9733);">$ 43560.00</div>
<div id="t101" class="t stock" style="left:1337.50px;width:300px;text-align:center;top:520.70px;transform:translateY(-50%);">12</div>
<div class="addb" style="top:501px;"><svg width="16" height="16" viewBox="0 0 16 16" fill="#0d6efd" ><path fill-rule="evenodd" d="M8 2a.5.5 0 0 1 .5.5v5h5a.5.5 0 0 1 0 1h-5v5a.5.5 0 0 1-1 0v-5h-5a.5.5 0 0 1 0-1h5v-5A.5.5 0 0 1 8 2"/></svg></div>
<div class="rb" style="top:545px;width:1451px"></div>
<div class="abs" style="left:1887px;top:140px;width:17px;height:407px;background:#161617"></div>
<svg class="abs" style="left:1890.5px;top:143px" width="10" height="9" viewBox="0 0 10 9" fill="none" stroke="#646464" stroke-width="2"><path d="M.8 7.300 5 3l4.200 4.300"/></svg>
<svg class="abs" style="left:1890.5px;top:533px" width="10" height="9" viewBox="0 0 10 9" fill="none" stroke="#646464" stroke-width="2"><path d="M.8 1.700 5 6l4.200-4.300"/></svg>
<div class="abs" style="left:1887px;top:465px;width:17px;height:64px;background:#7a7a7a"></div>
<div class="pn" style="top:576px;height:436px"></div>
<div class="ph" style="top:586px;height:67px"></div>
<div class="ib" style="top:600px;background:#1a2b2f"><svg width="19.2" height="19.2" viewBox="0 0 16 16" fill="#0dcaf0" ><path d="M0 1.5A.5.5 0 0 1 .5 1H2a.5.5 0 0 1 .485.379L2.89 3H14.5a.5.5 0 0 1 .49.598l-1 5a.5.5 0 0 1-.465.401l-9.397.472L4.415 11H13a.5.5 0 0 1 0 1H4a.5.5 0 0 1-.491-.408L2.01 3.607 1.61 2H.5a.5.5 0 0 1-.5-.5M3.102 4l.84 4.479 9.144-.459L13.89 4zM5 12a2 2 0 1 0 0 4 2 2 0 0 0 0-4m7 0a2 2 0 1 0 0 4 2 2 0 0 0 0-4m-7 1a1 1 0 1 1 0 2 1 1 0 0 1 0-2m7 0a1 1 0 1 1 0 2 1 1 0 0 1 0-2"/></svg></div>
<div id="t102" class="t ptt" style="left:493.40px;transform-origin:0 50%;top:620.00px;transform:translateY(-50%);letter-spacing:-0.029px;">PEDIDO EN CURSO</div>
<div class="abs" style="left:1248px;top:601px;width:360px;height:36px;background:#121212;border:1px solid #7d868e;border-radius:4px"></div>
<div class="abs" style="left:1248px;top:601px;width:36px;height:36px;background:#212529;border:1px solid #7d868e;border-right:none;border-radius:4px 0 0 4px"><div class="abs" style="left:8.8px;top:8.5px"><svg width="17" height="17" viewBox="0 0 16 16" fill="#c4c9ce" ><path d="M11 6a3 3 0 1 1-6 0 3 3 0 0 1 6 0"/><path fill-rule="evenodd" d="M0 8a8 8 0 1 1 16 0A8 8 0 0 1 0 8m8-7a7 7 0 0 0-5.468 11.37C3.242 11.226 4.805 10 8 10s4.757 1.225 5.468 2.37A7 7 0 0 0 8 1"/></svg></div></div>
<div id="t103" class="t " style="left:1293.00px;transform-origin:0 50%;top:621.00px;transform:translateY(-50%) scaleX(0.9554);font-size:15.5px;color:#9aa3ab">Cliente / Referencia...</div>
<div class="abs" style="left:1627px;top:597px;width:257px;height:44px;background:#0d0d0d;border:1px solid #323232;border-radius:8px"></div>
<div id="t104" class="t " style="left:1647.20px;transform-origin:0 50%;top:621.40px;transform:translateY(-50%) scaleX(0.9452);font-size:12.5px;color:#e0e0e0">TOTAL:</div>
<div id="t105" class="t " style="left:1696.80px;transform-origin:0 50%;top:619.50px;transform:translateY(-50%) scaleX(0.9621);font-size:26.5px;font-weight:bold;font-family:'Liberation Mono',monospace;color:#fff;-webkit-text-stroke:.4px #fff;text-shadow:0 0 6px rgba(255,255,255,.25)">$ 208120.00</div>
<div class="thb" style="top:653px;width:1468px;height:41px"></div>
<div class="rb" style="top:694px;width:1468px"></div>
<div id="t106" class="t tht" style="left:465.80px;transform-origin:0 50%;top:673.70px;transform:translateY(-50%);letter-spacing:0.389px;">PRODUCTO / ATRIBUTOS</div>
<div id="t107" class="t tht" style="left:1090.70px;transform-origin:0 50%;top:673.70px;transform:translateY(-50%);letter-spacing:0.400px;">MARCA</div>
<div id="t108" class="t tht" style="left:1350.70px;transform-origin:0 50%;top:673.70px;transform:translateY(-50%);letter-spacing:0.650px;">CANT.</div>
<div id="t109" class="t tht" style="left:1597.60px;transform-origin:0 50%;top:673.70px;transform:translateY(-50%);letter-spacing:0.857px;">P. UNIT.</div>
<div id="t110" class="t tht" style="left:1801.20px;transform-origin:0 50%;top:673.70px;transform:translateY(-50%) scaleX(0.9967);">TOTAL</div>
<div id="t111" class="t p2n" style="left:441.25px;transform-origin:0 50%;top:716.50px;transform:translateY(-50%) scaleX(0.9640);">Jean slim</div>
<div class="abs" style="left:521.6px;top:708.5px;width:1px;height:18px;background:#555"></div>
<div id="t112" class="t attr" style="left:531.60px;transform-origin:0 50%;top:718.80px;transform:translateY(-50%);letter-spacing:0.113px;">Negro / 40 / Jean/Denim / Mujer</div>
<div id="t113" class="t p2m" style="left:1090.10px;transform-origin:0 50%;top:718.90px;transform:translateY(-50%) scaleX(0.9594);">Levi's</div>
<div id="t114" class="t p2p" style="left:1581.70px;transform-origin:0 50%;top:716.70px;transform:translateY(-50%) scaleX(0.9733);">$ 45980.00</div>
<div id="t115" class="t p2t" style="left:1791.70px;transform-origin:0 50%;top:716.70px;transform:translateY(-50%);letter-spacing:0.367px;">$ 45980.00</div>
<div class="qty" style="top:699px"></div>
<div id="t116" class="t qt" style="left:1222.50px;width:300px;text-align:center;top:718.30px;transform:translateY(-50%);">1</div>
<div class="abs" style="left:1880.7px;top:709.0px"><svg width="18" height="18" viewBox="0 0 16 16" fill="#dc3545" ><path d="M2.146 2.854a.5.5 0 1 1 .708-.708L8 7.293l5.146-5.147a.5.5 0 0 1 .708.708L8.707 8l5.147 5.146a.5.5 0 0 1-.708.708L8 8.707l-5.146 5.147a.5.5 0 0 1-.708-.708L7.293 8z"/></svg></div>
<div class="rb" style="top:739px;width:1468px"></div>
<div id="t117" class="t p2n" style="left:440.50px;transform-origin:0 50%;top:762.10px;transform:translateY(-50%) scaleX(0.9693);">Remera basica</div>
<div class="abs" style="left:558.8px;top:754.1px;width:1px;height:18px;background:#555"></div>
<div id="t118" class="t attr" style="left:569.50px;transform-origin:0 50%;top:764.40px;transform:translateY(-50%);letter-spacing:0.240px;">M / Gris / Algodón / Mujer</div>
<div id="t119" class="t p2m" style="left:1090.10px;transform-origin:0 50%;top:764.50px;transform:translateY(-50%) scaleX(0.9594);">Zara</div>
<div id="t120" class="t p2p" style="left:1581.70px;transform-origin:0 50%;top:762.30px;transform:translateY(-50%) scaleX(0.9733);">$ 29040.00</div>
<div id="t121" class="t p2t" style="left:1791.70px;transform-origin:0 50%;top:762.30px;transform:translateY(-50%);letter-spacing:0.367px;">$ 29040.00</div>
<div class="qty" style="top:745px"></div>
<div id="t122" class="t qt" style="left:1222.50px;width:300px;text-align:center;top:763.90px;transform:translateY(-50%);">1</div>
<div class="abs" style="left:1880.7px;top:754.6px"><svg width="18" height="18" viewBox="0 0 16 16" fill="#dc3545" ><path d="M2.146 2.854a.5.5 0 1 1 .708-.708L8 7.293l5.146-5.147a.5.5 0 0 1 .708.708L8.707 8l5.147 5.146a.5.5 0 0 1-.708.708L8 8.707l-5.146 5.147a.5.5 0 0 1-.708-.708L7.293 8z"/></svg></div>
<div class="rb" style="top:785px;width:1468px"></div>
<div id="t123" class="t p2n" style="left:441.25px;transform-origin:0 50%;top:807.70px;transform:translateY(-50%) scaleX(0.9640);">Jean slim</div>
<div class="abs" style="left:521.6px;top:799.7px;width:1px;height:18px;background:#555"></div>
<div id="t124" class="t attr" style="left:532.30px;transform-origin:0 50%;top:810.00px;transform:translateY(-50%);letter-spacing:0.089px;">42 / Jean/Denim / Mujer / Azul Marino</div>
<div id="t125" class="t p2m" style="left:1090.10px;transform-origin:0 50%;top:810.10px;transform:translateY(-50%) scaleX(0.9594);">Levi's</div>
<div id="t126" class="t p2p" style="left:1581.70px;transform-origin:0 50%;top:807.90px;transform:translateY(-50%) scaleX(0.9733);">$ 45980.00</div>
<div id="t127" class="t p2t" style="left:1791.70px;transform-origin:0 50%;top:807.90px;transform:translateY(-50%);letter-spacing:0.367px;">$ 45980.00</div>
<div class="qty" style="top:791px"></div>
<div id="t128" class="t qt" style="left:1222.50px;width:300px;text-align:center;top:809.50px;transform:translateY(-50%);">1</div>
<div class="abs" style="left:1880.7px;top:800.2px"><svg width="18" height="18" viewBox="0 0 16 16" fill="#dc3545" ><path d="M2.146 2.854a.5.5 0 1 1 .708-.708L8 7.293l5.146-5.147a.5.5 0 0 1 .708.708L8.707 8l5.147 5.146a.5.5 0 0 1-.708.708L8 8.707l-5.146 5.147a.5.5 0 0 1-.708-.708L7.293 8z"/></svg></div>
<div class="rb" style="top:830px;width:1468px"></div>
<div id="t129" class="t p2n" style="left:440.50px;transform-origin:0 50%;top:853.30px;transform:translateY(-50%);letter-spacing:-0.042px;">Remera chomba</div>
<div class="abs" style="left:571.8px;top:845.3px;width:1px;height:18px;background:#555"></div>
<div id="t130" class="t attr" style="left:582.50px;transform-origin:0 50%;top:855.60px;transform:translateY(-50%);letter-spacing:0.154px;">L / Gris / Algodón / Hombre</div>
<div id="t131" class="t p2m" style="left:1090.10px;transform-origin:0 50%;top:855.70px;transform:translateY(-50%) scaleX(0.9594);">Lacoste</div>
<div id="t132" class="t p2p" style="left:1581.70px;transform-origin:0 50%;top:853.50px;transform:translateY(-50%) scaleX(0.9733);">$ 43560.00</div>
<div id="t133" class="t p2t" style="left:1791.70px;transform-origin:0 50%;top:853.50px;transform:translateY(-50%);letter-spacing:0.367px;">$ 43560.00</div>
<div class="qty" style="top:836px"></div>
<div id="t134" class="t qt" style="left:1222.50px;width:300px;text-align:center;top:855.10px;transform:translateY(-50%);">1</div>
<div class="abs" style="left:1880.7px;top:845.8px"><svg width="18" height="18" viewBox="0 0 16 16" fill="#dc3545" ><path d="M2.146 2.854a.5.5 0 1 1 .708-.708L8 7.293l5.146-5.147a.5.5 0 0 1 .708.708L8.707 8l5.147 5.146a.5.5 0 0 1-.708.708L8 8.707l-5.146 5.147a.5.5 0 0 1-.708-.708L7.293 8z"/></svg></div>
<div class="rb" style="top:876px;width:1468px"></div>
<div id="t135" class="t p2n" style="left:440.50px;transform-origin:0 50%;top:898.90px;transform:translateY(-50%);letter-spacing:-0.042px;">Remera chomba</div>
<div class="abs" style="left:571.8px;top:890.9px;width:1px;height:18px;background:#555"></div>
<div id="t136" class="t attr" style="left:582.50px;transform-origin:0 50%;top:901.20px;transform:translateY(-50%);letter-spacing:0.179px;">Blanco / L / Algodón / Hombre</div>
<div id="t137" class="t p2m" style="left:1090.10px;transform-origin:0 50%;top:901.30px;transform:translateY(-50%) scaleX(0.9594);">Lacoste</div>
<div id="t138" class="t p2p" style="left:1581.70px;transform-origin:0 50%;top:899.10px;transform:translateY(-50%) scaleX(0.9733);">$ 43560.00</div>
<div id="t139" class="t p2t" style="left:1791.70px;transform-origin:0 50%;top:899.10px;transform:translateY(-50%);letter-spacing:0.367px;">$ 43560.00</div>
<div class="qty" style="top:882px"></div>
<div id="t140" class="t qt" style="left:1222.50px;width:300px;text-align:center;top:900.70px;transform:translateY(-50%);">1</div>
<div class="abs" style="left:1880.7px;top:891.4px"><svg width="18" height="18" viewBox="0 0 16 16" fill="#dc3545" ><path d="M2.146 2.854a.5.5 0 1 1 .708-.708L8 7.293l5.146-5.147a.5.5 0 0 1 .708.708L8.707 8l5.147 5.146a.5.5 0 0 1-.708.708L8 8.707l-5.146 5.147a.5.5 0 0 1-.708-.708L7.293 8z"/></svg></div>
<div class="abs" style="left:436px;top:922px;width:1468px;height:79px;background:#1b1b1b;border-top:2px solid #383838"></div>
<div class="abs" style="left:456px;top:943px;width:133px;height:39px;border:1px solid #6c757d;border-radius:5px"><div class="abs" style="left:19px;top:13px"><svg width="16" height="16" viewBox="0 0 16 16" fill="#6c757d" ><path fill-rule="evenodd" d="M15 8a.5.5 0 0 0-.5-.5H2.707l3.147-3.146a.5.5 0 1 0-.708-.708l-4 4a.5.5 0 0 0 0 .708l4 4a.5.5 0 0 0 .708-.708L2.707 8.5H14.5A.5.5 0 0 0 15 8"/></svg></div></div>
<div id="t141" class="t bt" style="left:503.20px;transform-origin:0 50%;top:962.00px;transform:translateY(-50%) scaleX(0.9493);color:#6c757d">VOLVER</div>
<div class="abs" style="left:1429px;top:943px;width:189px;height:39px;border:1px solid #0dcaf0;border-radius:5px"><div class="abs" style="left:20.5px;top:12.5px"><svg width="16" height="16" viewBox="0 0 16 16" fill="#0dcaf0" ><path d="M14 14V4.500L9.500 0H4a2 2 0 0 0-2 2v12a2 2 0 0 0 2 2h8a2 2 0 0 0 2-2M9.500 3A1.500 1.500 0 0 0 11 4.500h2V14a1 1 0 0 1-1 1H4a1 1 0 0 1-1-1V2a1 1 0 0 1 1-1h5.500z"/><path d="M4.603 14.087a.8.8 0 0 1-.438-.42c-.195-.388-.13-.776.08-1.102.198-.307.526-.568.897-.787a7.700 7.700 0 0 1 1.482-.645 20 20 0 0 0 1.062-2.227 7.300 7.300 0 0 1-.43-1.295c-.086-.4-.119-.796-.046-1.136.075-.354.274-.672.65-.823.192-.077.4-.12.602-.077a.7.700 0 0 1 .477.365c.088.164.12.356.127.538.007.188-.012.396-.047.614-.084.51-.27 1.134-.52 1.794a11 11 0 0 0 .98 1.686 5.800 5.800 0 0 1 1.334.05c.364.066.734.195.96.465.12.144.193.32.2.518.007.192-.047.382-.138.563a1.040 1.040 0 0 1-.354.416.860.860 0 0 1-.51.138c-.331-.014-.654-.196-.933-.417a5.700 5.700 0 0 1-.911-.95 11.700 11.700 0 0 0-1.997.406 11.300 11.300 0 0 1-1.020 1.510c-.292.35-.609.656-.927.787a.8.8 0 0 1-.58.029m1.379-1.901q-.25.115-.459.238c-.328.194-.541.383-.647.547-.094.145-.096.25-.04.361q.016.032.026.044l.035-.012c.137-.056.355-.235.635-.572a8 8 0 0 0 .45-.606m1.640-1.330a13 13 0 0 1 1.010-.193 12 12 0 0 1-.51-.858 21 21 0 0 1-.5 1.050zm2.446.45q.226.245.435.410c.24.190.407.253.498.256a.1.100 0 0 0 .07-.015.300.300 0 0 0 .094-.125.440.440 0 0 0 .059-.2.100.100 0 0 0-.026-.063c-.052-.062-.2-.152-.518-.209a4 4 0 0 0-.612-.053zM8.078 7.800a7 7 0 0 0 .2-.828q.046-.282.038-.465a.600.600 0 0 0-.032-.198.500.500 0 0 0-.145.040c-.087.035-.158.106-.196.283-.04.192-.03.469.046.822q.036.167.09.346z"/></svg></div></div>
<div id="t142" class="t bt" style="left:1475.80px;transform-origin:0 50%;top:962.00px;transform:translateY(-50%) scaleX(0.9418);color:#0dcaf0">PRESUPUESTO</div>
<div class="abs" style="left:1627px;top:943px;width:257px;height:39px;background:#27ae60;border-radius:5px"><div class="abs" style="left:29px;top:11.5px"><svg width="17" height="17" viewBox="0 0 16 16" fill="#fff" ><path d="M15.964.686a.5.5 0 0 0-.65-.65L.767 5.855H.766l-.452.18a.5.5 0 0 0-.082.887l.41.26.001.002 4.995 3.178 3.178 4.995.002.002.26.41a.5.5 0 0 0 .886-.083zm-1.833 1.89L6.637 10.07l-.215-.338a.5.5 0 0 0-.154-.154l-.338-.215 7.494-7.494 1.178-.471z"/></svg></div></div>
<div id="t143" class="t bt" style="left:1683.80px;transform-origin:0 50%;top:962.00px;transform:translateY(-50%);letter-spacing:0.200px;color:#fff">ENVIAR A CAJA (F9)</div>
</body></html>
